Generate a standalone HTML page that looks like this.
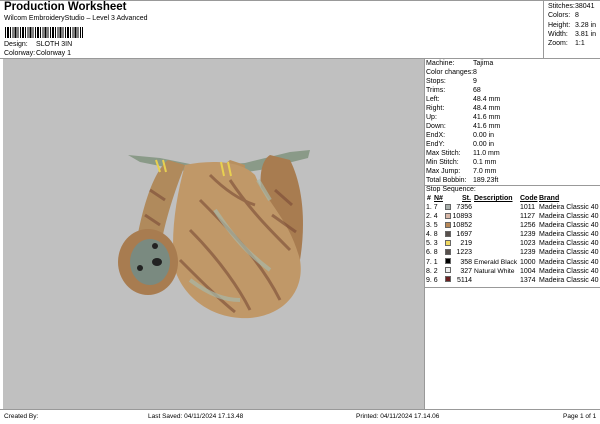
<html><head><style>
*{margin:0;padding:0;box-sizing:border-box}
body{width:600px;height:424px;background:#fff;font-family:"Liberation Sans",Arial,sans-serif;font-size:7px;color:#000;position:relative;overflow:hidden}
.a{position:absolute;white-space:nowrap}
.sw{position:absolute;width:6px;height:6px;border:1px solid #666}
</style></head><body>
<div class="a" style="left:4px;top:1px;font-size:11.5px;font-weight:bold">Production Worksheet</div>
<div class="a" style="left:4px;top:15px">Wilcom EmbroideryStudio – Level 3 Advanced</div>
<div class="a" style="left:5px;top:27px;width:78px;height:11px;background:repeating-linear-gradient(90deg,#000 0 1px,#fff 1px 2px,#000 2px 4px,#fff 4px 5px,#000 5px 6px,#fff 6px 7.5px)"></div>
<div class="a" style="left:4px;top:41px">Design:</div><div class="a" style="left:36px;top:41px">SLOTH 3IN</div>
<div class="a" style="left:4px;top:50px">Colorway:</div><div class="a" style="left:36px;top:50px">Colorway 1</div>
<div class="a" style="left:0;top:0;width:600px;height:1px;background:#999"></div>
<div class="a" style="left:543px;top:0;width:1px;height:59px;background:#999"></div>
<div class="a" style="left:548px;top:2px;line-height:9.3px">Stitches:<br>Colors:<br>Height:<br>Width:<br>Zoom:</div>
<div class="a" style="left:575px;top:2px;line-height:9.3px">38041<br>8<br>3.28 in<br>3.81 in<br>1:1</div>
<div class="a" style="left:0;top:58px;width:600px;height:1px;background:#999"></div>
<div class="a" style="left:3px;top:59px;width:421px;height:350px;background:#c0c0c0"></div>
<div class="a" style="left:424px;top:59px;width:1px;height:350px;background:#999"></div>
<div class="a" style="left:426px;top:59px;line-height:9px">Machine:<br>Color changes:<br>Stops:<br>Trims:<br>Left:<br>Right:<br>Up:<br>Down:<br>EndX:<br>EndY:<br>Max Stitch:<br>Min Stitch:<br>Max Jump:<br>Total Bobbin:</div>
<div class="a" style="left:473px;top:59px;line-height:9px">Tajima<br>8<br>9<br>68<br>48.4 mm<br>48.4 mm<br>41.6 mm<br>41.6 mm<br>0.00 in<br>0.00 in<br>11.0 mm<br>0.1 mm<br>7.0 mm<br>189.23ft</div>
<div class="a" style="left:425px;top:185px;width:175px;height:1px;background:#999"></div>
<div class="a" style="left:426px;top:186px">Stop Sequence:</div>
<div class="a" style="left:427px;top:195px;font-weight:bold">#</div>
<div class="a" style="left:434px;top:195px;font-weight:bold;text-decoration:underline">N#</div>
<div class="a" style="left:462px;top:195px;font-weight:bold;text-decoration:underline">St.</div>
<div class="a" style="left:474px;top:195px;font-weight:bold;text-decoration:underline">Description</div>
<div class="a" style="left:520px;top:195px;font-weight:bold;text-decoration:underline">Code</div>
<div class="a" style="left:539px;top:195px;font-weight:bold;text-decoration:underline">Brand</div>
<div class="a" style="left:426px;top:203px;line-height:9.1px">1. 7<br>2. 4<br>3. 5<br>4. 8<br>5. 3<br>6. 8<br>7. 1<br>8. 2<br>9. 6</div>
<div class="a" style="left:448px;top:203px;line-height:9.1px;width:24px;text-align:right">7356<br>10893<br>10852<br>1697<br>219<br>1223<br>358<br>327<br>5114</div>
<div class="a" style="left:474px;top:203px;line-height:9.1px;font-size:6.7px"><br><br><br><br><br><br>Emerald Black<br>Natural White</div>
<div class="a" style="left:520px;top:203px;line-height:9.1px">1011<br>1127<br>1256<br>1239<br>1023<br>1239<br>1000<br>1004<br>1374</div>
<div class="a" style="left:539px;top:203px;line-height:9.1px">Madeira Classic 40<br>Madeira Classic 40<br>Madeira Classic 40<br>Madeira Classic 40<br>Madeira Classic 40<br>Madeira Classic 40<br>Madeira Classic 40<br>Madeira Classic 40<br>Madeira Classic 40</div>
<div class="sw" style="left:445px;top:204px;background:#a8b0ac"></div>
<div class="sw" style="left:445px;top:213px;background:#d8b8a8"></div>
<div class="sw" style="left:445px;top:222px;background:#b88858"></div>
<div class="sw" style="left:445px;top:231px;background:#58504c"></div>
<div class="sw" style="left:445px;top:240px;background:#f0d860"></div>
<div class="sw" style="left:445px;top:249px;background:#58504c"></div>
<div class="sw" style="left:445px;top:258px;background:#000"></div>
<div class="sw" style="left:445px;top:267px;background:#f0f0f0"></div>
<div class="sw" style="left:445px;top:276px;background:#6a2020"></div>
<div class="a" style="left:425px;top:287px;width:175px;height:1px;background:#999"></div>
<div class="a" style="left:0;top:409px;width:600px;height:1px;background:#999"></div>
<div class="a" style="left:4px;top:413px;font-size:6.5px">Created By:</div>
<div class="a" style="left:148px;top:413px;font-size:6.5px">Last Saved: 04/11/2024 17.13.48</div>
<div class="a" style="left:356px;top:413px;font-size:6.5px">Printed: 04/11/2024 17.14.06</div>
<div class="a" style="left:563px;top:413px;font-size:6.5px">Page 1 of 1</div>
<svg class="a" style="left:0;top:0" width="600" height="424">
<path d="M128 155 L160 158 L200 166 L245 163 L290 152 L310 150 L308 158 L260 170 L215 177 L180 170 L140 162 Z" fill="#8a9a88"/>
<path d="M168 160 C150 175 140 220 135 250 L160 250 C165 220 175 190 185 165 Z" fill="#b08a5c"/>
<path d="M230 160 C215 170 210 200 215 230 L245 230 C240 200 245 180 245 165 Z" fill="#b89060"/>
<path d="M270 155 C255 165 260 200 270 230 L300 260 C305 230 305 190 290 160 Z" fill="#a87c50"/>
<path d="M185 165 C175 200 170 240 175 270 C185 300 215 320 250 318 C285 315 305 290 300 260 C290 220 265 200 255 175 C240 160 210 160 185 165 Z" fill="#c09868"/>
<g stroke="#7a4a36" stroke-width="3" fill="none" opacity=".6">
<path d="M200 200 C230 230 260 260 280 300"/><path d="M190 230 C220 260 240 290 250 310"/><path d="M230 180 C250 210 270 230 290 250"/>
<path d="M180 260 C200 280 220 300 235 312"/><path d="M150 190 L165 200 M145 215 L160 225 M275 190 L292 205 M272 215 L296 232"/>
<path d="M210 175 C225 190 240 200 255 205"/></g>
<g stroke="#a8b8a8" stroke-width="4" fill="none" opacity=".7">
<path d="M215 210 C235 240 250 255 270 270"/><path d="M190 280 C210 295 225 300 240 300"/><path d="M258 180 L270 200"/></g>
<ellipse cx="148" cy="262" rx="30" ry="33" fill="#a87c50"/>
<ellipse cx="150" cy="262" rx="20" ry="23" fill="#7a8a80"/>
<circle cx="155" cy="246" r="3" fill="#222"/><circle cx="140" cy="268" r="3" fill="#222"/>
<ellipse cx="157" cy="262" rx="5" ry="4" fill="#222"/>
<path d="M156 160 L160 172 M163 160 L166 172 M221 162 L224 176 M228 162 L231 176" stroke="#e8d050" stroke-width="2"/>
</svg>
</body></html>
